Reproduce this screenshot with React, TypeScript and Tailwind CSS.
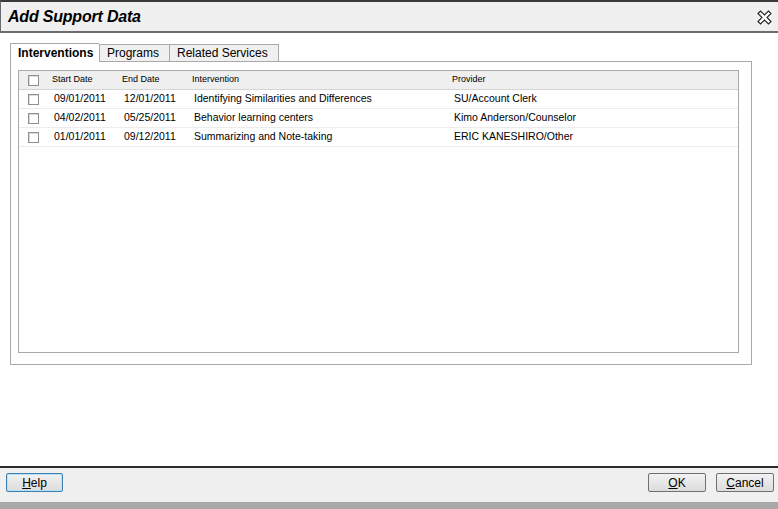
import React from 'react';

const rows = [
  { start: '09/01/2011', end: '12/01/2011', name: 'Identifying Similarities and Differences', provider: 'SU/Account Clerk' },
  { start: '04/02/2011', end: '05/25/2011', name: 'Behavior learning centers', provider: 'Kimo Anderson/Counselor' },
  { start: '01/01/2011', end: '09/12/2011', name: 'Summarizing and Note-taking', provider: 'ERIC KANESHIRO/Other' },
];

const Check = () => (
  <span className="block h-[11px] w-[11px] border border-[#8f8f8f] bg-white shadow-[inset_1px_1px_0_#dcdcdc]" />
);

const App = () => {
  return (
    <div className="flex h-[509px] w-[778px] flex-col overflow-hidden bg-white font-['Liberation_Sans',Arial,sans-serif] text-black">
      {/* title bar */}
      <div className="flex h-[33px] shrink-0 items-center justify-between border-t-2 border-b-2 border-l border-t-[#3a3a3a] border-b-[#6b6b6b] border-l-[#6b6b6b] bg-[#f0f0f0] pr-[5px] pl-[7px]">
        <span className="text-[16px] font-bold italic tracking-[-0.2px]">Add Support Data</span>
        <svg width="17" height="17" viewBox="0 0 17 17" className="mt-[1px]">
          <path
            d="M2 4.5 L4.5 2 L8.5 6 L12.5 2 L15 4.5 L11 8.5 L15 12.5 L12.5 15 L8.5 11 L4.5 15 L2 12.5 L6 8.5 Z"
            fill="white"
            stroke="#222"
            strokeWidth="1.1"
            strokeLinejoin="miter"
          />
        </svg>
      </div>

      {/* body */}
      <div className="flex-1 px-[10px] pt-[10px]">
        <div className="flex h-[19px] w-[742px] items-end text-[12px]">
          <div className="flex h-[19px] w-[89px] items-center border-t border-l border-[#a9a9a9] bg-white pl-[7px] font-bold">
            Interventions
          </div>
          <div className="flex h-[18px] w-[70px] items-center border-t border-l border-b border-[#a9a9a9] bg-[#f0f0f0] pl-[7px]">
            Programs
          </div>
          <div className="flex h-[18px] w-[110px] items-center border-t border-l border-r border-b border-[#a9a9a9] bg-[#f0f0f0] pl-[7px]">
            Related Services
          </div>
          <div className="flex-1 self-stretch border-b border-[#a9a9a9]" />
        </div>
        <div className="h-[303px] w-[742px] border-r border-b border-l border-[#a9a9a9] px-[7px] pt-[8px]">
          <div className="h-[283px] w-[721px] border border-[#a9a9a9]">
            <div className="flex h-[19px] items-center border-b border-[#d4d4d4] bg-[#efefef] text-[9px]">
              <span className="ml-[9px] w-[24px]"><Check /></span>
              <span className="w-[70px]">Start Date</span>
              <span className="w-[70px]">End Date</span>
              <span className="w-[260px]">Intervention</span>
              <span>Provider</span>
            </div>
            {rows.map((r) => (
              <div key={r.start} className="flex h-[19px] items-center border-b border-[#ececec] text-[10.5px]">
                <span className="ml-[9px] w-[26px]"><Check /></span>
                <span className="w-[70px]">{r.start}</span>
                <span className="w-[70px]">{r.end}</span>
                <span className="w-[260px]">{r.name}</span>
                <span>{r.provider}</span>
              </div>
            ))}
          </div>
        </div>
      </div>

      {/* footer */}
      <div className="flex h-[36px] shrink-0 items-start justify-between border-t-2 border-[#2a2a2a] bg-[#f0f0f0] pt-[5px] pr-[4px] pl-[6px]">
        <button className="flex h-[19px] w-[57px] items-center justify-center rounded-[2px] border border-[#3c7fb1] bg-gradient-to-b from-[#f2f2f2] to-[#dcdcdc] text-[12px] shadow-[inset_0_0_0_1px_#b6e1f7]">
          <span className="underline decoration-1 underline-offset-1">H</span>elp
        </button>
        <div className="flex gap-[10px]">
          <button className="flex h-[19px] w-[58px] items-center justify-center rounded-[2px] border border-[#707070] bg-gradient-to-b from-[#f2f2f2] to-[#dcdcdc] text-[12px]">
            <span className="underline decoration-1 underline-offset-1">O</span>K
          </button>
          <button className="flex h-[19px] w-[58px] items-center justify-center rounded-[2px] border border-[#707070] bg-gradient-to-b from-[#f2f2f2] to-[#dcdcdc] text-[12px]">
            <span className="underline decoration-1 underline-offset-1">C</span>ancel
          </button>
        </div>
      </div>
      <div className="h-[7px] shrink-0 bg-[#a8a8a8]" />
    </div>
  );
};

export default App;
